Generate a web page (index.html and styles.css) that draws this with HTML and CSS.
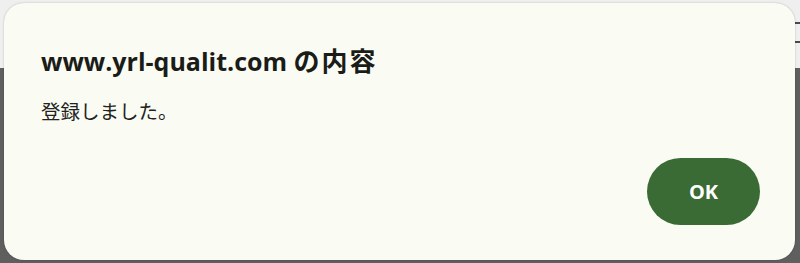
FILE: index.html
```html
<!DOCTYPE html>
<html lang="ja">
<head>
<meta charset="utf-8">
<link rel="stylesheet" href="styles.css">
</head>
<body>
<div class="page">
  <div class="topbar">
    <span class="mark mark-1"></span>
    <span class="mark mark-2"></span>
  </div>
  <div class="overlay"></div>
</div>
<div class="dialog" role="alertdialog">
  <h1 class="title">www.yrl-qualit.com <span class="cjk">の内容</span></h1>
  <p class="message">登録しました。</p>
  <div class="actions">
    <button class="ok">OK</button>
  </div>
</div>
</body>
</html>
```

FILE: styles.css
```css
html, body {
  margin: 0;
  padding: 0;
  width: 800px;
  height: 263px;
  overflow: hidden;
}
body {
  font-family: "Open Sans", "Noto Sans", "Noto Sans CJK JP", sans-serif;
  position: relative;
}
.page {
  display: flex;
  flex-direction: column;
  height: 263px;
}
.topbar {
  height: 68px;
  background: #efefef;
  position: relative;
}
.mark {
  position: absolute;
  right: 0;
  width: 5px;
  height: 2px;
  background: #4a4a4a;
}
.mark-1 { top: 22px; }
.mark-2 { top: 41px; }
.overlay {
  flex: 1;
  background: #5f5f5f;
}
.dialog {
  position: absolute;
  left: 4px;
  top: 3px;
  width: 791px;
  height: 257px;
  box-sizing: border-box;
  background: #fafcf4;
  border-radius: 20px;
  box-shadow: 0 0 2px rgba(0,0,0,0.25);
  padding: 41px 35px 35px 37px;
  display: flex;
  flex-direction: column;
}
.title {
  margin: 0;
  font-size: 25px;
  font-weight: 700;
  line-height: 32px;
  color: #1b1c18;
  font-family: "Open Sans", "Noto Sans CJK JP", sans-serif;
}
.cjk {
  font-family: "Noto Sans CJK JP", sans-serif;
  font-size: 26px;
  letter-spacing: 2px;
}
.message {
  margin: 21px 0 0 0;
  font-size: 19.5px;
  line-height: 26px;
  color: #222320;
  font-family: "Noto Sans CJK JP", sans-serif;
}
.actions {
  margin-top: auto;
  display: flex;
  justify-content: flex-end;
}
.ok {
  width: 113px;
  height: 67px;
  border: none;
  border-radius: 34px;
  background: #3a6b34;
  color: #ffffff;
  font-family: "Open Sans", sans-serif;
  font-weight: 700;
  font-size: 20px;
  padding: 0;
}
```
